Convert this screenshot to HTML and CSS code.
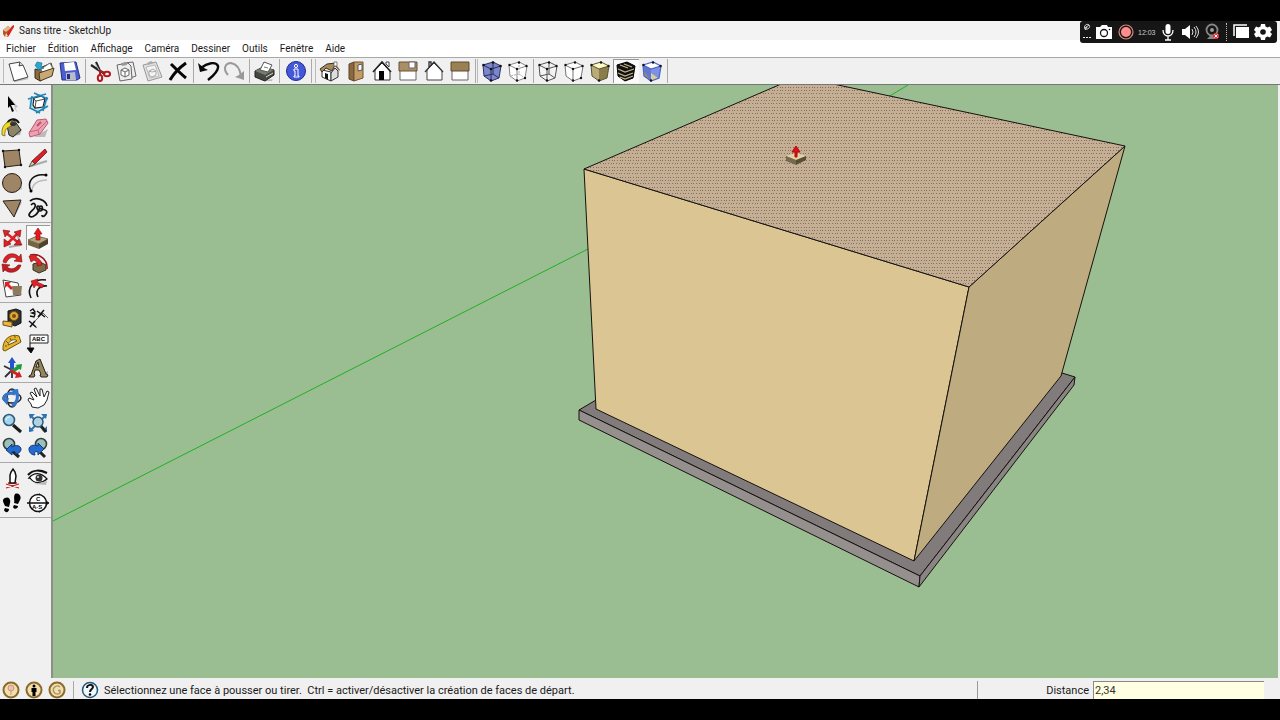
FILE: index.html
```html
<!DOCTYPE html>
<html lang="fr">
<head>
<meta charset="utf-8">
<title>Sans titre - SketchUp</title>
<link rel="stylesheet" href="styles.css">
</head>
<body>
<div class="app">
  <header class="titlebar">
    <svg class="logo" viewBox="0 0 14 14"><path d="M2 6L7 2l3 2-1 6-5 3-2-3z" fill="#b5532c"/><path d="M2 6l5-4 3 2-5 4z" fill="#e9b48c"/><path d="M5 12l6-10 2-1v2L7 13z" fill="#d8251c"/><path d="M4 13l1-4 2 3z" fill="#f3dcae"/></svg>
    <h1 class="title">Sans titre - SketchUp</h1>
  </header>
  <nav class="menubar">
    <button>Fichier</button><button>Édition</button><button>Affichage</button><button>Caméra</button><button>Dessiner</button><button>Outils</button><button>Fenêtre</button><button>Aide</button>
  </nav>

  <div class="toolbar">
    <div class="group first">
      <button aria-label="Nouveau"><svg viewBox="0 0 24 24"><path d="M6 21l15-2 2 1-14 3z" fill="#bbb"/><path d="M3 5l11-2 3 3 5 12-14 4z" fill="#fff" stroke="#444"/><path d="M14 3l-1 4 4-1" fill="#ddd" stroke="#444"/></svg></button>
      <button aria-label="Ouvrir"><svg viewBox="0 0 24 24"><path d="M3 10l4 1 1-2 11-5 1 3v8l-12 7-5-3z" fill="#8a6a3f" stroke="#3a2c17"/><path d="M9 10l9-6 3 6-10 5z" fill="#fff" stroke="#777"/><path d="M7 14l15-5-2 8-12 5z" fill="#c8a875" stroke="#4a3820"/><path d="M3 7l2-4 5 1-1 4 3 1-6 2-2-4z" fill="#26a9d6" stroke="#10658a" stroke-width=".6"/></svg></button>
      <button aria-label="Enregistrer"><svg viewBox="0 0 24 24"><path d="M2 4l16-1 4 16-3 2H4z" fill="#4c5fd0" stroke="#24307f"/><path d="M6 4l10-1 2 8-11 1z" fill="#fff"/><path d="M8 14l9-1 1 8H8z" fill="#b9bdc9"/><path d="M9 15h3v5H9z" fill="#24307f"/></svg></button>
    </div>
    <div class="group">
      <button aria-label="Couper"><svg viewBox="0 0 24 24"><path d="M8 3l4 9 5 3M3 6l9 6" stroke="#222" stroke-width="2.2" fill="none"/><path d="M7 4l4 7" stroke="#bbb"/><g fill="none" stroke="#b3191c" stroke-width="2"><ellipse cx="19" cy="15" rx="3" ry="2.3"/><ellipse cx="12" cy="19" rx="2.2" ry="3"/><path d="M12 16v-4l5 2"/></g></svg></button>
      <button aria-label="Copier"><svg viewBox="0 0 24 24"><g fill="#eee" stroke="#666"><path d="M10 4l9-1 3 14-9 3z"/><path d="M3 6l11-2 3 3 1 13-12 2z"/></g><path d="M7 11l4-2 4 2v5l-4 2-4-2zM7 11l4 2 4-2M11 13v5" fill="#fff" stroke="#666"/><path d="M7 4l6-1v3l-5 1z" fill="#999"/></svg></button>
      <button aria-label="Coller"><svg viewBox="0 0 24 24"><path d="M3 6l13-3 6 15-14 4z" fill="#e0e0e0" stroke="#999"/><path d="M6 8l9-2 4 11-9 2z" fill="#f4f4f4" stroke="#bbb"/><path d="M9 12l4-2 3 2v4l-4 2-3-2zM9 12l3 1 4-1" fill="none" stroke="#aaa"/><path d="M7 4l4-2 3 2-6 2z" fill="#aaa"/></svg></button>
      <button aria-label="Supprimer"><svg viewBox="0 0 24 24"><path d="M5 5c5 5 10 10 15 14M20 4C13 9 8 14 4 21" stroke="#050505" stroke-width="3" fill="none"/></svg></button>
    </div>
    <div class="group">
      <button aria-label="Annuler"><svg viewBox="0 0 24 24"><path d="M2 4l2 9 8-2-4-2z" fill="#080808"/><path d="M5 9c6-5 15-7 17-2 1 5-5 10-10 14" fill="none" stroke="#080808" stroke-width="2.4"/></svg></button>
      <button aria-label="Rétablir"><svg viewBox="0 0 24 24"><path d="M22 12v9l-9-3 4-2z" fill="#999"/><path d="M6 16C0 9 4 4 9 4c6 1 9 6 10 13" fill="none" stroke="#999" stroke-width="2"/></svg></button>
    </div>
    <div class="group">
      <button aria-label="Imprimer"><svg viewBox="0 0 24 24"><path d="M7 22l14-2 2-5-3 7z" fill="#bbb"/><path d="M3 12l8-4 11 3v5l-9 6-10-4z" fill="#454841" stroke="#222"/><path d="M3 12l10 4 9-5-11-3z" fill="#777b70"/><path d="M8 11l4-8 8 3-4 7z" fill="#fff" stroke="#555"/><path d="M12 8l4 1" stroke="#777"/><path d="M14 18l7-4" stroke="#ddd"/></svg></button>
    </div>
    <div class="group wide">
      <button aria-label="Infos sur le modèle"><svg viewBox="0 0 24 24"><circle cx="12" cy="12" r="9.5" fill="#4558d8" stroke="#202b8c"/><path d="M10 10h4v7h1v1h-5v-1h1v-5h-1z" fill="#4558d8" stroke="#fff"/><circle cx="12" cy="7" r="1.6" fill="none" stroke="#fff"/></svg></button>
    </div>
    <div class="group bar">
      <button aria-label="Iso"><svg viewBox="0 0 24 24"><path d="M4 11v7l9 4v-9z" fill="#fff" stroke="#333"/><path d="M13 14l4-5 3 3v6l-7 4z" fill="#ddd" stroke="#333"/><path d="M2 10l7-5 9-1-4 8-6-3-4 4z" fill="#a58a60" stroke="#3a2f1f"/><path d="M17 4l5 7-1 1-5-6z" fill="#7e6947"/><path d="M7 14l3 1v6l-3-2z" fill="#111"/><path d="M16 3h3v4h-3z" fill="#fff" stroke="#555" stroke-width=".7"/></svg></button>
      <button aria-label="Dessus"><svg viewBox="0 0 24 24"><path d="M5 5l5-2v19l-5-2z" fill="#8a6840" stroke="#5e4525"/><path d="M10 3h9v16l-9 3z" fill="#c29b66" stroke="#6e5330"/><path d="M14 6l4-1v6l-4 1z" fill="#fff" stroke="#555"/></svg></button>
      <button aria-label="Face"><svg viewBox="0 0 24 24"><path d="M5 11l7-7 8 8v9H5z" fill="#fff" stroke="#333"/><path d="M3 13l9-10 9 10" fill="none" stroke="#222" stroke-width="1.6"/><path d="M9 12h5v9H9z" fill="#050505"/><path d="M16 3h3v5l-3-3z" fill="#fff" stroke="#444"/></svg></button>
      <button aria-label="Droite"><svg viewBox="0 0 24 24"><path d="M4 11h16v10H4z" fill="#fff" stroke="#666"/><path d="M3 3h18v9H3z" fill="#aa8e65" stroke="#665336"/><path d="M13 3h6v6h-6z" fill="#fff" stroke="#666"/></svg></button>
      <button aria-label="Arrière"><svg viewBox="0 0 24 24"><path d="M5 11l7-7 8 8v9H5z" fill="#fff" stroke="#444"/><path d="M3 13l9-10 9 10M7 8V3h2v3" fill="none" stroke="#333" stroke-width="1.3"/></svg></button>
      <button aria-label="Gauche"><svg viewBox="0 0 24 24"><path d="M4 11h16v10H4z" fill="#fff" stroke="#666"/><path d="M3 3h18v9H3z" fill="#9b8053" stroke="#5d4c30"/></svg></button>
    </div>
    <div class="group bar">
      <button aria-label="Rayons X"><svg viewBox="0 0 24 24"><path d="M3 6l10-3 8 4-2 12-8 3-7-5z" fill="#7c86c9"/><path d="M3 6l8 4 10-3-2 12-8 3-7-5zl10-3 8 4M11 10v12M13 3v12l6 4M13 15l-9 2" fill="none" stroke="#292f63"/><g fill="#111"><circle cx="3.500" cy="6" r="1.300"/><circle cx="13" cy="3.500" r="1.300"/><circle cx="20.500" cy="7" r="1.300"/><circle cx="11" cy="10" r="1.300"/><circle cx="11" cy="21.500" r="1.300"/></g></svg></button>
      <button aria-label="Arêtes arrière"><svg viewBox="0 0 24 24"><path d="M3 6l10-3 8 4-2 12-8 3-7-5z" fill="#fff"/><path d="M3 6l8 4 10-3-2 12-8 3-7-5zl10-3 8 4M11 10v12" fill="none" stroke="#888"/><path d="M13 3v12l6 4M13 15l-9 2" fill="none" stroke="#aaa" stroke-dasharray="2 1"/><g fill="#111"><circle cx="3.500" cy="6" r="1.200"/><circle cx="13" cy="3.500" r="1.200"/><circle cx="20.500" cy="7" r="1.200"/><circle cx="11" cy="10" r="1.200"/><circle cx="11" cy="21.500" r="1.200"/><circle cx="19" cy="19" r="1.200"/></g></svg></button>
    </div>
    <div class="group">
      <button aria-label="Filaire"><svg viewBox="0 0 24 24"><path d="M3 6l8 4 10-3-2 12-8 3-7-5zl10-3 8 4M11 10v12M13 3v12l6 4M13 15l-9 2" fill="#f5f5f5" stroke="#555"/><g fill="#111"><circle cx="3.500" cy="6" r="1.200"/><circle cx="13" cy="3.500" r="1.200"/><circle cx="20.500" cy="7" r="1.200"/><circle cx="11" cy="10" r="1.200"/><circle cx="11" cy="21.500" r="1.200"/></g></svg></button>
      <button aria-label="Ligne cachée"><svg viewBox="0 0 24 24"><path d="M3 6l10-3 8 4-2 12-8 3-7-5z" fill="#fff"/><path d="M3 6l8 4 10-3-2 12-8 3-7-5zl10-3 8 4M11 10v12" fill="none" stroke="#777"/><g fill="#111"><circle cx="3.500" cy="6" r="1.200"/><circle cx="13" cy="3.500" r="1.200"/><circle cx="20.500" cy="7" r="1.200"/><circle cx="11" cy="10" r="1.200"/><circle cx="11" cy="21.500" r="1.200"/><circle cx="19" cy="19" r="1.200"/></g></svg></button>
      <button aria-label="Ombré"><svg viewBox="0 0 24 24"><path d="M3 6l10-3 8 4-10 3z" fill="#fdf9c4"/><path d="M3 6l8 4v12l-7-5z" fill="#b8ad76"/><path d="M11 10l10-3-2 12-8 3z" fill="#8b7d4a"/><path d="M3 6l8 4 10-3-2 12-8 3-7-5zl10-3 8 4" fill="none" stroke="#5a5233"/><g fill="#111"><circle cx="3.500" cy="6" r="1.200"/><circle cx="13" cy="3.500" r="1.200"/><circle cx="20.500" cy="7" r="1.200"/><circle cx="11" cy="21.500" r="1.200"/></g></svg></button>
      <button class="on" aria-label="Ombré avec textures" aria-pressed="true"><svg viewBox="0 0 24 24"><path d="M3 6l10-3 8 4-2 12-8 3-7-5z" fill="#111" stroke="#000"/><path d="M6 6l8 3M10 5l8 3M4 10l7 3 9-3M4 14l7 3 8-3M6 18l5 2 8-3" fill="none" stroke="#c2b48a" stroke-width="1.300"/></svg></button>
      <button aria-label="Monochrome"><svg viewBox="0 0 24 24"><path d="M3 6l10-3 8 4-10 3z" fill="#fff"/><path d="M3 6l8 4v12l-7-5z" fill="#5f78d6"/><path d="M4 12l7 10-7-5z" fill="#9c905f"/><path d="M11 10l10-3-2 12-8 3z" fill="#7d92e2"/><path d="M11 14l7 5-7 3z" fill="#d8cf9a"/><path d="M3 6l8 4 10-3-2 12-8 3-7-5zl10-3 8 4" fill="none" stroke="#4f66c8" stroke-width="1.300"/><g fill="#111"><circle cx="3.500" cy="6" r="1.200"/><circle cx="13" cy="3.500" r="1.200"/><circle cx="20.500" cy="7" r="1.200"/><circle cx="11" cy="21.500" r="1.200"/></g></svg></button>
    </div>
  </div>

  <main class="work">
    <aside class="tools">
      <div class="set">
        <button aria-label="Sélectionner"><svg viewBox="0 0 24 24"><path d="M10 7l8 9-4 1 4 5z" fill="#bbb"/><path d="M8 5l7 9h-4l3 6-2 1-2-6-2 2z" fill="#000"/></svg></button>
        <button aria-label="Créer un composant"><svg viewBox="0 0 24 24"><path d="M3 10l9-7 10 5-3 10-7 4-8-5z" fill="#bfe3f3"/><path d="M8 7l8-2 3 3-2 8-8 1-2-3z" fill="#fff" stroke="#222" stroke-width="1.200"/><path d="M7 7l3 3-1 7M10 10l9-2" fill="none" stroke="#222" stroke-width=".8"/><path d="M2 8l18-5M8 2l14 6M4 17l10 5M21 6l-4 14M6 5L4 18M22 15l-12 7" stroke="#2484b5" stroke-width="1.600"/></svg></button>
        <button aria-label="Colorier"><svg viewBox="0 0 24 24"><path d="M9 20l11-1 2-6z" fill="#aaa"/><path d="M7 9l7-5 7 10-8 7-4-2z" fill="#8e8569" stroke="#222"/><path d="M7 9c1-6 8-8 12-2" fill="none" stroke="#111" stroke-width="2"/><path d="M12 6C6 5 1 10 2 19l3 1c-1-6 2-9 7-10z" fill="#efd929" stroke="#665d13" stroke-width=".7"/><ellipse cx="13" cy="8" rx="3" ry="2" fill="#333"/></svg></button>
        <button aria-label="Effacer"><svg viewBox="0 0 24 24"><path d="M8 21l11 0 3-8z" fill="#bbb"/><path d="M11 4l9-1 2 4-8 11-10 3-1-4z" fill="#f0a0b0" stroke="#b65d74"/><path d="M3 16l9-2 9-9M12 14l1 4" fill="none" stroke="#c2687f"/><path d="M11 10l4-4" stroke="#bb526e" stroke-width="2"/></svg></button>
      </div>
      <div class="set">
        <button aria-label="Rectangle"><svg viewBox="0 0 24 24"><path d="M3 5l16-1 2 15-16 2z" fill="#9d8565" stroke="#282018"/><g fill="#111"><circle cx="3" cy="5" r="1.200"/><circle cx="19" cy="4" r="1.200"/><circle cx="21" cy="19" r="1.200"/><circle cx="5" cy="21" r="1.200"/></g></svg></button>
        <button aria-label="Ligne"><svg viewBox="0 0 24 24"><path d="M5 20l16-5" stroke="#aaa" stroke-width="2"/><path d="M6 15L19 3l2 3L9 18z" fill="#d61f26" stroke="#6e1014" stroke-width=".8"/><path d="M3 21l3-6 3 3z" fill="#dfc28d" stroke="#333" stroke-width=".8"/></svg></button>
        <button aria-label="Cercle"><svg viewBox="0 0 24 24"><path d="M14 21l8-3-1-5z" fill="#bbb"/><circle cx="12" cy="12" r="9.500" fill="#9d8565" stroke="#282018"/></svg></button>
        <button aria-label="Arc"><svg viewBox="0 0 24 24"><path d="M6 20c0-7 6-11 15-11" fill="none" stroke="#bbb" stroke-width="1.500"/><path d="M5 20C0 10 8 2 20 4" fill="none" stroke="#111" stroke-width="1.500"/><circle cx="5" cy="20" r="1.500"/><circle cx="20" cy="4" r="1.500"/></svg></button>
        <button aria-label="Polygone"><svg viewBox="0 0 24 24"><path d="M15 20l7-14-3 1z" fill="#aaa"/><path d="M3 5l18-1-7 17z" fill="#9d8565" stroke="#282018"/></svg></button>
        <button aria-label="Main levée"><svg viewBox="0 0 24 24"><path d="M4 5C10 0 20 4 21 10M5 9c3-3 5-1 4 2s-6 5-6 8c1 4 7 1 9-3s2-6 0-6-1 5 2 5 3-5 1-5-3 2 1 3 6 2 4 5-4 3-4 1" fill="none" stroke="#111" stroke-width="1.700"/></svg></button>
      </div>
      <div class="set">
        <button aria-label="Déplacer"><svg viewBox="0 0 24 24"><path d="M9 21l12-2M17 8l3 8" stroke="#aaa" stroke-width="2"/><path d="M6 7l13 10M18 7L7 18" stroke="#dc2227" stroke-width="2.600"/><path d="M3 4l7 1-5 6zM21 4l-1 7-6-5zM22 19l-8 0 5-6zM4 21l0-8 7 5z" fill="#dc2227" stroke="#7b1114" stroke-width=".6"/></svg></button>
        <button class="on" aria-label="Pousser/Tirer" aria-pressed="true"><svg viewBox="0 0 24 24"><path d="M2 14l9-4 11 3-9 5z" fill="#b6a47a" stroke="#4e4229" stroke-width=".7"/><path d="M2 14l11 4v5L2 19z" fill="#756643"/><path d="M13 18l9-5v5l-9 5z" fill="#4e432d"/><path d="M12 2l4 6h-2v6h-4V8H8z" fill="#e8171c" stroke="#8a0d10" stroke-width=".6"/></svg></button>
        <button aria-label="Faire pivoter"><svg viewBox="0 0 24 24"><path d="M3 11C5 1 15 1 19 6l2-3 1 8-8-1 3-2c-4-3-8-2-11 4z" fill="#da2228" stroke="#751013" stroke-width=".6"/><path d="M21 14c-2 8-12 9-16 5l-2 2-1-8 8 1-3 2c4 3 8 2 11-2z" fill="#c51c22" stroke="#751013" stroke-width=".6"/></svg></button>
        <button aria-label="Suivez-moi"><svg viewBox="0 0 24 24"><path d="M7 13l7-2 6 3v5l-7 3-6-3z" fill="#7d6a48" stroke="#3b301d"/><path d="M4 4c10-2 18 5 17 14" fill="none" stroke="#9d161a" stroke-width="1.500"/><path d="M3 5l8-1-1 2c4 2 6 5 6 8l-5 1c1-3 0-4-3-6L5 11z" fill="#df2429" stroke="#791214" stroke-width=".6"/></svg></button>
        <button aria-label="Mettre à l'échelle"><svg viewBox="0 0 24 24"><path d="M3 4l15 3 3 12-15 2z" fill="#fff" stroke="#444"/><path d="M12 10l10 0-1 9-8 0z" fill="#8c7c5d"/><path d="M5 6l6 0-2 2 4 4-2 2-4-4-2 2z" fill="#df2025"/></svg></button>
        <button aria-label="Décalage"><svg viewBox="0 0 24 24"><path d="M5 22C0 12 8 2 20 4M12 21c-3-6 1-12 9-11" fill="none" stroke="#111" stroke-width="1.600"/><path d="M5 5l7-2-1 3 7 3-2 3-6-3-2 3z" fill="#df2227" stroke="#881216" stroke-width=".6"/></svg></button>
      </div>
      <div class="set">
        <button aria-label="Mètre"><svg viewBox="0 0 24 24"><path d="M8 5l8-2 5 2v12l-6 3-7-3z" fill="#303335" stroke="#111"/><circle cx="14" cy="10" r="4.500" fill="#e5aa32" stroke="#754e12"/><circle cx="14" cy="10" r="2" fill="#74531a"/><path d="M3 15l9 1v5l-9-2z" fill="#edb73b" stroke="#68501a"/></svg></button>
        <button aria-label="Cotation"><svg viewBox="0 0 24 24"><path d="M6 18L17 7M17 7l5 5M6 18l5 4" stroke="#666"/><path d="M3 15l7 6M4 21l5-6M11 5l8 6M12 11l6-7" stroke="#111" stroke-width="1.500"/><path d="M4 5l3-2 2 3-3 1 3 1-1 3-4-1" fill="none" stroke="#111" stroke-width="1.400"/></svg></button>
        <button aria-label="Rapporteur"><svg viewBox="0 0 24 24"><path d="M3 19C2 9 10 2 19 5l2 6-16 9z" fill="#e5b62b" stroke="#6e5310"/><path d="M8 14c1-4 4-6 8-5l1 1z" fill="#f0f0f0" stroke="#6e5310"/><path d="M5 15h2M6 10l2 2M10 7l1 2M15 5v2" stroke="#6e5310"/></svg></button>
        <button aria-label="Texte"><svg viewBox="0 0 24 24"><path d="M4 4h18v8H4z" fill="#fff" stroke="#222"/><text class="abc" x="6" y="10">ABC</text><path d="M4 12v8M1 17h7l-3 5z" stroke="#111"/></svg></button>
        <button aria-label="Axes"><svg viewBox="0 0 24 24"><path d="M12 14L4 10M12 14l-7 7M12 13v9" stroke="#2d3034" stroke-width="1.800"/><path d="M10 14V7H8l4-6 4 6h-2v7z" fill="#2354cd"/><path d="M11 14l6-4-2-1 7-1-1 6-2-1-6 4z" fill="#169d37"/><path d="M11 13l7 4 1-2 3 6-7 1 1-3-6-3z" fill="#d02128"/></svg></button>
        <button aria-label="Texte 3D"><svg viewBox="0 0 24 24"><path d="M13 20l9-5-1 6z" fill="#aaa"/><path d="M3 20l2-1 5-14 4-2 6 15 2 1-1 2h-6l-1-2 1-1-2-4H9l-1 4 1 1-1 2H3zM10 11h3l-1-5z" fill="#958660" stroke="#262116"/></svg></button>
      </div>
      <div class="set">
        <button aria-label="Orbite"><svg viewBox="0 0 24 24"><ellipse cx="12" cy="12" rx="9" ry="5" fill="none" stroke="#222" stroke-width="1.500"/><ellipse cx="12" cy="12" rx="5" ry="9" fill="none" stroke="#222" stroke-width="1.500"/><path d="M4 13C4 8 10 6 15 8" fill="none" stroke="#3276ca" stroke-width="3"/><path d="M16 6c3 5 1 11-4 14" fill="none" stroke="#3276ca" stroke-width="3"/><path d="M2 13l7-1-2 7zM10 4l8-1 1 7z" fill="#3276ca"/></svg></button>
        <button aria-label="Panoramique"><svg viewBox="0 0 24 24"><path d="M6 21l-1-3-3-4 1-2 5 2-4-7 2-1 5 5-3-8 2-1 4 8 0-7h2l2 8 3-6 2 1-2 8-3 5-6 3z" fill="#fff" stroke="#222"/></svg></button>
        <button aria-label="Zoom"><svg viewBox="0 0 24 24"><path d="M13 14l8 7" stroke="#1a1a1a" stroke-width="3"/><circle cx="9" cy="9" r="5.500" fill="#a4d3ec" stroke="#315a78" stroke-width="1.600"/><path d="M6 9c0-2 2-3 4-3" stroke="#fff" fill="none"/></svg></button>
        <button aria-label="Zoom étendu"><svg viewBox="0 0 24 24"><path d="M3 3h6L4 8zM21 3h-6l5 5zM3 21v-6l5 5zM21 21l0-6-5 5z" fill="#2c72b7"/><path d="M4 4l16 16M20 4L4 20" stroke="#2c72b7" stroke-width="2"/><path d="M14 14l6 7" stroke="#222" stroke-width="3"/><circle cx="12" cy="11" r="5" fill="#add4e5" stroke="#315a78" stroke-width="1.500"/></svg></button>
        <button aria-label="Vue précédente"><svg viewBox="0 0 24 24"><path d="M11 14l8 7" stroke="#222" stroke-width="3"/><circle cx="9" cy="8" r="5.500" fill="#9dbfb9" stroke="#31413d" stroke-width="1.600"/><path d="M6 14l6-6v3c4-3 9-1 9 2 0 3-3 5-6 5 1-2 0-3-3-2v3z" fill="#246bd0" stroke="#123a78"/></svg></button>
        <button aria-label="Vue suivante"><svg viewBox="0 0 24 24"><path d="M12 14l7 7" stroke="#222" stroke-width="3"/><circle cx="15" cy="8" r="5.500" fill="#9dbfb9" stroke="#31413d" stroke-width="1.600"/><path d="M18 13l-6-6v3c-5-2-9 0-9 3 0 4 3 6 6 6-1-3 0-4 3-3v3z" fill="#246bd0" stroke="#123a78"/></svg></button>
      </div>
      <div class="set">
        <button aria-label="Positionner la caméra"><svg viewBox="0 0 24 24"><path d="M6 18l13 4M6 22l13-4M8 17h9" stroke="#c5221d" stroke-width="1.300"/><path d="M10 17V9l1-3 2-3 2 3 1 4-1 7z" fill="#fff" stroke="#111" stroke-width="1.500"/></svg></button>
        <button aria-label="Pivoter"><svg viewBox="0 0 24 24"><path d="M3 12c5-6 12-6 18 1-6 5-13 5-17-1z" fill="#fff" stroke="#111" stroke-width="1.300"/><path d="M2 9c5-6 13-5 19-2" fill="none" stroke="#111" stroke-width="2"/><circle cx="13" cy="12" r="3.500" fill="#333"/><circle cx="12" cy="11" r="1" fill="#eee"/><path d="M8 18l12 1 1-4z" fill="#bbb"/></svg></button>
        <button aria-label="Visite"><svg viewBox="0 0 24 24"><path d="M15 3c4-2 7 3 5 6l-2 4-4-1c1-3-1-6 1-9zM14 14l4 1c0 3-4 4-5 1zM5 7c4-2 6 2 5 5l-1 4-4-1C4 12 1 9 5 7zM5 17l4 1c0 4-4 4-5 1z"/></svg></button>
        <button aria-label="Plan de section"><svg viewBox="0 0 24 24"><path d="M13 2l10 10-10 10z" fill="#111"/><circle cx="12" cy="12" r="8.500" fill="#fff" stroke="#111" stroke-width="1.500"/><path d="M1 12h22" stroke="#111" stroke-width="1.500"/><text class="abc" x="10" y="10">C</text><text class="abc" x="6" y="18">A·S</text></svg></button>
      </div>
    </aside>

    <section class="canvas">
      <svg class="scene" viewBox="53 85 1226 593" preserveAspectRatio="xMinYMin slice" role="img" aria-label="Modèle 3D">
        <defs>
          <pattern id="dots" width="8" height="10" patternUnits="userSpaceOnUse"><path d="M0 0h8v10H0z" fill="#c6ae93"/><path d="M1 0h1v1H1zM4 0h1v1H4zM6 0h1v1H6zM0 3h1v1H0zM3 3h1v1H3zM5 3h1v1H5zM1 7h1v1H1zM4 7h1v1H4zM6 7h1v1H6z" fill="#7d6f6a"/></pattern>
        </defs>
        <path d="M53 521L588 249M888 97l20-12" stroke="#22b022" fill="none"/>
        <g stroke="#15120f" stroke-linejoin="round">
          <path d="M579 410l17-10 466-27 13 4-155 199z" fill="#817c7b"/>
          <path d="M579 410l341 166-1 11-340-167z" fill="#958f8d"/>
          <path d="M920 576l155-199-1 8-155 202z" fill="#8a8482"/>
          <path d="M584 169l385 118-55 274-318-152z" fill="#dbc593"/>
          <path d="M969 287l156-141-64 230-147 185z" fill="#bfab80"/>
          <path d="M584 169l218-94h-11l334 71-156 141z" fill="url(#dots)"/>
        </g>
        <path d="M786 156l10-3 10 3-10 4z" fill="#e6d2a0"/>
        <path d="M786 156l10 4v5l-10-4z" fill="#756a50"/>
        <path d="M796 160l10-4v4l-10 5z" fill="#574d39"/>
        <path d="M796 146l4 6h-3v5h-2v-5h-3z" fill="#e40e12" stroke="#a80d10"/>
      </svg>
    </section>
  </main>

  <footer class="status">
    <button class="round" aria-label="Géolocalisation"><svg viewBox="0 0 18 18"><circle cx="9" cy="9" r="7.500" fill="#f3dfae" stroke="#8b6a2b" stroke-width="2"/><circle cx="9" cy="7" r="3" fill="#eac0a8" stroke="#c99783"/><path d="M9 9v5" stroke="#c99783"/></svg></button>
    <button class="round" aria-label="Crédits"><svg viewBox="0 0 18 18"><circle cx="9" cy="9" r="7.500" fill="#f3dfae" stroke="#8b6a2b" stroke-width="2"/><circle cx="9" cy="5" r="1.500"/><path d="M6.500 7h5v4h-1v4h-3v-4h-1z"/></svg></button>
    <button class="round" aria-label="Connexion"><svg viewBox="0 0 18 18"><circle cx="9" cy="9" r="7.500" fill="#f3dfae" stroke="#8b6a2b" stroke-width="2"/><path d="M12 6a4 4 0 1 0 0 6V9.500h-2" fill="none" stroke="#a8946a" stroke-width="1.500"/></svg></button>
    <span class="rule"></span>
    <button class="help" aria-label="Aide"><svg viewBox="0 0 18 18"><circle cx="9" cy="9" r="7.500" fill="#f2f7fa" stroke="#24597e" stroke-width="1.500"/><path d="M6 7c0-4 6-4 6-1 0 2-3 2-3 5" fill="none" stroke="#111" stroke-width="2"/><circle cx="9" cy="13.500" r="1.300"/></svg></button>
    <p class="hint">Sélectionnez une face à pousser ou tirer.&nbsp; Ctrl = activer/désactiver la création de faces de départ.</p>
    <div class="measure"><label for="distance">Distance</label><input id="distance" type="text" value="2,34"></div>
  </footer>

  <div class="recorder">
    <svg class="grip" viewBox="0 0 10 20"><path d="M3 7c-2-3 2-6 4-4s-1 5-4 4M3 6l4-3M3 8l2-3" fill="none" stroke="#ddd"/><path d="M1 15h2v1H1zM4 15h2v1H4zM7 15h2v1H7z" fill="#eee"/></svg>
    <button aria-label="Photo"><svg viewBox="0 0 20 20"><path d="M2 5h4l2-2h5l1 2h4v12H2z" fill="#fff"/><circle cx="10" cy="11" r="3.500" fill="none" stroke="#161616" stroke-width="1.300"/><circle cx="15.500" cy="7.500" r=".8"/></svg></button>
    <button class="rec" aria-label="Enregistrement"><svg viewBox="0 0 20 20"><circle cx="10" cy="10" r="7" fill="none" stroke="#d98a80" stroke-width="1.200"/><circle cx="10" cy="10" r="5" fill="#ff8d8d"/></svg></button>
    <time class="clock">12:03</time>
    <button aria-label="Micro"><svg viewBox="0 0 20 20"><rect x="7.500" y="2" width="5" height="10" rx="2.500" fill="#fff"/><path d="M5 8c0 8 10 8 10 0M10 14v4M7 18h6" fill="none" stroke="#fff" stroke-width="1.300"/></svg></button>
    <button aria-label="Son"><svg viewBox="0 0 20 20"><path d="M2 7h3l5-4v14l-5-4H2z" fill="#fff"/><path d="M12 7q2 3 0 6M14 5q4 5 0 10M16 4q5 6 0 12" fill="none" stroke="#ddd"/></svg></button>
    <button aria-label="Webcam"><svg viewBox="0 0 20 20"><circle cx="10" cy="8" r="5.500" fill="none" stroke="#888" stroke-width="1.800"/><circle cx="10" cy="8" r="2" fill="#999"/><path d="M5 17l3-3h4l3 3z" fill="#888"/><circle cx="14" cy="14" r="3" fill="#e33737"/><path d="M12.500 12.500l3 3M15.500 12.500l-3 3" stroke="#fff"/></svg></button>
    <span class="dotted"></span>
    <button aria-label="Fenêtres"><svg viewBox="0 0 20 20"><path d="M3 14V3h13" fill="none" stroke="#fff" stroke-width="1.500"/><path d="M5 5h13v11H5z" fill="#fff"/></svg></button>
    <button class="gear" aria-label="Paramètres"><svg viewBox="0 0 20 20"><path d="M8 2h4l.5 2.500 2 1L17 4.500l2 3.500-2 2 2 2-2 3.500-2.500-1-2 1L12 18H8l-.5-2.500-2-1-2.500 1L1 12l2-2-2-2 2-3.500 2.500 1 2-1z" fill="#fff"/><circle cx="10" cy="10" r="2.800" fill="#161616"/></svg></button>
  </div>
</div>
</body>
</html>
```
FILE: styles.css
```css
* { box-sizing: border-box; }
body {
  margin: 0;
  background: #000;
  color: #1a1a1a;
  font-family: Roboto, "Noto Sans", sans-serif;
  font-size: 10px;
}
button {
  padding: 0;
  border: 0;
  background: none;
  color: inherit;
  font: inherit;
}
svg { display: block; }
.app {
  position: relative;
  display: flex;
  flex-direction: column;
  height: 100vh;
  padding: 21px 0;
}
.titlebar {
  display: flex;
  align-items: center;
  gap: 4px;
  height: 19px;
  padding-left: 1px;
  background: #f3f3f3;
}
.logo { width: 14px; height: 14px; }
.title { margin: 0; font-size: 10px; font-weight: 400; }
.menubar {
  display: flex;
  align-items: center;
  gap: 12px;
  height: 17px;
  padding-left: 6px;
  background: #fff;
}
.toolbar {
  display: flex;
  align-items: center;
  height: 28px;
  padding-left: 3px;
  background: #f0f0f0;
  border-top: 1px solid #a8a8a8;
  border-bottom: 1px solid #777;
}
.group {
  display: flex;
  margin-right: 1px;
  padding-right: 2px;
  border-right: 1px solid #aaa;
}
.group.first { padding-left: 1px; border-left: 1px solid #bbb; }
.group.wide { margin-right: 3px; padding: 0 2px; }
.group.bar { padding-left: 1px; border-left: 1px solid #bbb; }
.group button { width: 26px; padding: 0 1px; }
.group svg { width: 24px; height: 24px; }
.on { background: #fafafa; box-shadow: inset 1px 1px #999; }
.work { display: flex; flex: 1; min-height: 0; background: #f0f0f0; }
.tools {
  flex: none;
  width: 53px;
  padding-top: 5px;
  border-right: 2px solid #8a8f88;
}
.set {
  display: grid;
  grid-template-columns: 26px 24px;
  grid-auto-rows: 25px;
  margin-bottom: 2px;
  padding-bottom: 2px;
  border-bottom: 1px solid #aaa;
}
.set svg { width: 24px; height: 24px; }
.abc { font: 700 6px "Liberation Sans", sans-serif; }
.canvas { flex: 1; min-width: 0; margin-right: 2px; background: #9abd92; }
.scene { width: 100%; height: 100%; }
.status {
  display: flex;
  align-items: center;
  gap: 5px;
  height: 21px;
  padding: 3px 16px 0 2px;
  background: #f0f0f0;
  font-size: 11px;
}
.status svg { width: 18px; height: 18px; }
.rule { width: 1px; height: 18px; margin: 0 2px; background: #aaa; }
.hint { flex: 1; margin: 0; white-space: nowrap; }
.measure {
  display: flex;
  align-items: center;
  justify-content: flex-end;
  gap: 4px;
  width: 287px;
  border-left: 1px solid #999;
}
.measure input {
  width: 171px;
  height: 18px;
  padding: 0 1px;
  border: 0;
  border-top: 1px solid #888;
  border-left: 1px solid #888;
  background: #ffffe1;
  color: #333;
  font: inherit;
}
.recorder {
  position: absolute;
  top: 21px;
  right: 3px;
  display: flex;
  align-items: center;
  gap: 2px;
  width: 197px;
  height: 22px;
  padding-left: 2px;
  border-radius: 3px;
  background: #161616;
}
.recorder svg { width: 20px; height: 20px; }
.recorder .grip { width: 10px; }
.recorder .clock {
  width: 18px;
  color: #ccc;
  font: 7px "Liberation Sans", sans-serif;
}
.dotted { height: 18px; margin: 0 2px; border-left: 1px dotted #bbb; }
```
